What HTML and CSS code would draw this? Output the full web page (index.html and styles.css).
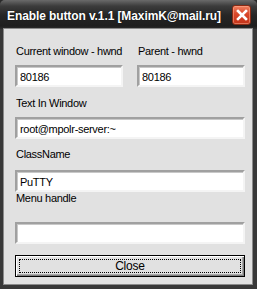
FILE: index.html
```html
<!DOCTYPE html>
<html lang="en">
<head>
    <meta charset="UTF-8">
    <title>Enable button v.1.1</title>
    <link rel="stylesheet" href="styles.css">
</head>
<body>
    <div class="window">
        <div class="titlebar">
            <span class="title">Enable button v.1.1 [MaximK@mail.ru]</span>
            <button class="close-x" type="button" aria-label="Close">
                <svg width="12" height="12" viewBox="0 0 12 12">
                    <path d="M2 2 L10 10 M10 2 L2 10" stroke="#fff" stroke-width="2.6" stroke-linecap="square"/>
                </svg>
            </button>
        </div>

        <div class="client">
            <div class="row">
                <div class="col">
                    <label class="lbl">Current window - hwnd</label>
                    <input class="field" type="text" value="80186">
                </div>
                <div class="col">
                    <label class="lbl">Parent - hwnd</label>
                    <input class="field" type="text" value="80186">
                </div>
            </div>

            <label class="lbl l3">Text In Window</label>
            <input class="field" type="text" value="root@mpolr-server:~">

            <label class="lbl l4">ClassName</label>
            <input class="field f4" type="text" value="PuTTY">

            <label class="lbl l5">Menu handle</label>
            <input class="field f5" type="text" value="">

            <button class="btn" type="button">Close</button>
        </div>
    </div>
</body>
</html>
```

FILE: styles.css
```css
body {
    margin: 0;
    padding: 0;
    background-color: #2a2a2a;
    font-family: 'Liberation Sans', Arial, sans-serif;
}
.window {
    width: 257px;
    height: 289px;
    box-sizing: border-box;
    background-color: #383838;
    border-radius: 5px 5px 0 0;
    display: flex;
    flex-direction: column;
    overflow: hidden;
}
.titlebar {
    height: 29px;
    flex: none;
    display: flex;
    align-items: center;
    justify-content: space-between;
    padding: 0 6px 0 7px;
    background: linear-gradient(#6a6a6a 0px, #3c3c3c 6px, #262626 15px, #1e1e1e 26px, #2e2e2e 29px);
}
.title {
    color: #fff;
    font-weight: bold;
    font-size: 12px;
    letter-spacing: -0.1px;
    padding-top: 2px;
    white-space: nowrap;
    text-shadow: 0 0 1px #000;
}
.close-x {
    width: 19px;
    height: 20px;
    padding: 0;
    margin-top: 1px;
    border: 1px solid #8a2a14;
    border-radius: 3px;
    background: linear-gradient(#f08060, #d9472a 45%, #c2331a);
    display: flex;
    align-items: center;
    justify-content: center;
    box-shadow: inset 0 0 0 1px rgba(255, 180, 150, 0.5);
}
.client {
    flex: 1;
    margin: 0 5px 5px 4px;
    background-color: #e1e1e1;
    box-shadow: 0 0 0 1px #8a8a8a;
    padding: 16px 7px 0 11px;
    display: flex;
    flex-direction: column;
}
.row {
    display: flex;
    gap: 14px;
}
.col {
    width: 108px;
    display: flex;
    flex-direction: column;
}
.lbl {
    display: block;
    font-size: 11px;
    line-height: 13px;
    height: 13px;
    letter-spacing: -0.3px;
    white-space: nowrap;
    color: #000;
    padding-left: 1px;
}
.field {
    box-sizing: border-box;
    width: 100%;
    height: 22px;
    margin: 7px 0 0 0;
    padding: 1px 2px 0 3px;
    border: 2px solid;
    border-color: #a0a0a0 #f4f4f4 #f4f4f4 #a0a0a0;
    box-shadow: inset 1px 1px 0 #c8c8c8;
    background-color: #fff;
    font-family: 'Liberation Sans', Arial, sans-serif;
    font-size: 11px;
    letter-spacing: -0.3px;
    color: #000;
    outline: none;
}
.l3 { margin-top: 10px; }
.l4 { margin-top: 9px; }
.f4 { margin-top: 9px; }
.l5 { margin-top: 0; }
.f5 { margin-top: 17px; }
.btn {
    position: relative;
    margin-top: 11px;
    height: 22px;
    width: 100%;
    padding: 0;
    border: 1px solid #000;
    background-color: #e1e1e1;
    box-shadow: inset 1px 1px 0 #fff, inset -1px -1px 0 #808080, inset -2px -2px 0 #a8a8a8;
    font-family: 'Liberation Sans', Arial, sans-serif;
    font-size: 12px;
    letter-spacing: -0.2px;
    color: #000;
}
.btn::after {
    content: '';
    position: absolute;
    left: 3px;
    right: 3px;
    top: 3px;
    bottom: 3px;
    border: 1px dotted #000;
}
```
